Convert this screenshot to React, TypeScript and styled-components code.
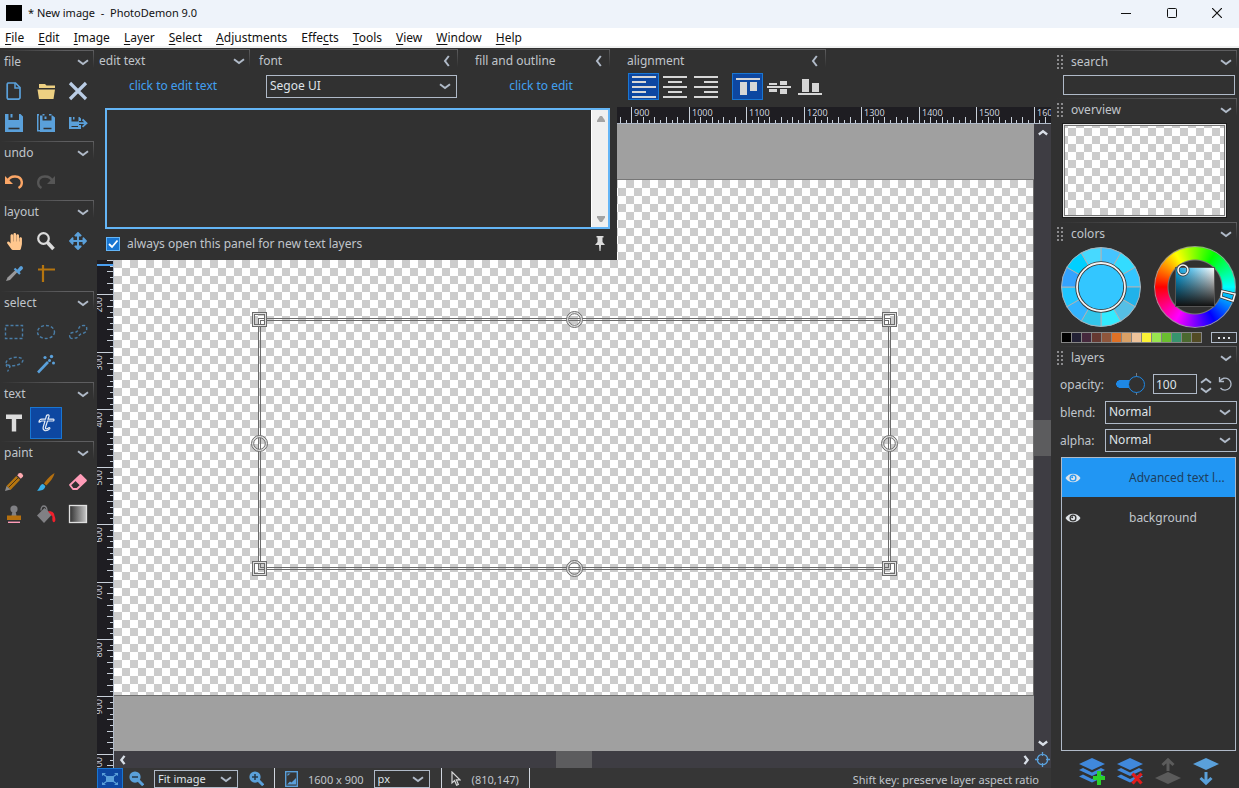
import React, { useId } from "react";
import styled, { createGlobalStyle, css } from "styled-components";
import { FaHandPaper, FaArrowsAlt } from "react-icons/fa";

const c = {
  bg: "#313131",
  line: "#5e5e60",
  text: "#c0c5cb",
  edge: "#b0bac8",
  blue: "#5aa0da",
  link: "#42a0f0",
  activeFill: "#0d47a1",
  activeEdge: "#1976d2",
  track: "#3e3d43",
  thumb: "#5c5c5e",
  ruler: "#1e1d22",
  canvas: "#a0a0a0",
};

const checker = css`
  background-color: #fff;
  background-image: conic-gradient(#fff 0 25%, #ccc 0 50%, #fff 0 75%, #ccc 0);
  background-size: 16px 16px;
`;

const GlobalStyle = createGlobalStyle`
  * { box-sizing: border-box; }
  body { margin: 0; background: ${c.bg}; }
  button, input, select, textarea { font: inherit; color: inherit; }
  button { padding: 0; border: 0; background: none; }
  svg { display: block; flex: none; }
`;

const Window = styled.div`
  display: flex;
  flex-direction: column;
  height: 100vh;
  min-height: 600px;
  overflow: hidden;
  background: ${c.bg};
  color: ${c.text};
  font: 12px/16px "Noto Sans", "Open Sans", sans-serif;
`;

/* title and menu */

const TitleBar = styled.header`
  display: flex;
  align-items: center;
  height: 28px;
  flex: none;
  padding-left: 6px;
  background: #eef3fa;
  color: #111;
`;
const AppIcon = styled.span`
  width: 16px;
  height: 16px;
  margin: 0 6px 2px 0;
  background: #000;
`;
const Title = styled.h1`
  flex: 1;
  margin: 0;
  padding-bottom: 2px;
  font-size: 11px;
  font-weight: 400;
  white-space: pre;
`;
const WindowButton = styled.button`
  display: grid;
  place-items: center;
  width: 46px;
  height: 24px;
  margin-bottom: 2px;
  &:last-child { width: 44px; }
`;
const MenuBar = styled.nav`
  display: flex;
  gap: 14px;
  height: 20px;
  flex: none;
  align-items: flex-end;
  padding-left: 5px;
  border-bottom: 2px solid #f0f1f1;
  background: #fff;
  color: #111;
`;
const MenuItem = styled.button`
  line-height: 16px;
  u { text-underline-offset: 2px; }
`;

const Body = styled.div`
  display: grid;
  grid-template-columns: 97px minmax(0, 1fr) 188px;
  grid-template-rows: minmax(0, 1fr);
  flex: 1;
  min-height: 0;
`;

/* panel headings */

const Heading = styled.button<{ $h: number }>`
  display: flex;
  align-items: center;
  width: 100%;
  height: ${(p) => p.$h}px;
  padding: 0 5px 0 4px;
  text-align: left;
  background:
    linear-gradient(to right, transparent, ${c.line} 70%) top / 100% 1px no-repeat,
    linear-gradient(${c.line}, transparent) right top / 1px 18px no-repeat;
  span { flex: 1; white-space: nowrap; }
`;

type Dir = "down" | "left" | "up" | "right";
const turn: Record<Dir, number> = { down: 0, left: 90, up: 180, right: 270 };

function Chevron({ dir = "down", size = 12, color = c.edge }: { dir?: Dir; size?: number; color?: string }) {
  return (
    <svg width={size} height={size} viewBox="0 0 12 12" aria-hidden="true">
      <path d="M1 4.2 6 8 11 4.2" fill="none" stroke={color} strokeWidth={size > 10 ? 2 : 2.8} transform={`rotate(${turn[dir]} 6 6)`} />
    </svg>
  );
}

/* tool box */

const ToolBox = styled.aside`
  padding: 2px 3px 0 0;
  overflow: hidden;
  ${Heading} { padding-bottom: 2px; }
`;
const ToolGroup = styled.section`
  margin-bottom: 2px;
`;
const ToolGrid = styled.div`
  display: grid;
  grid-template-columns: repeat(3, 32px);
  margin-left: -2px;
`;
const ToolButton = styled.button<{ $on?: boolean }>`
  display: grid;
  place-items: center;
  height: 32px;
  border: 1px solid ${(p) => (p.$on ? c.activeEdge : "transparent")};
  background: ${(p) => (p.$on ? c.activeFill : "transparent")};
`;

const Icon = ({ children, size = 20 }: { children: React.ReactNode; size?: number }) => (
  <svg width={size} height={size} viewBox="0 0 20 20" fill="none" aria-hidden="true">
    {children}
  </svg>
);

const dash = { stroke: "#4a7da6", strokeWidth: 1.4, strokeDasharray: "3 2" };

const toolGroups: { title: string; tools: { name: string; icon: React.ReactNode; on?: boolean }[] }[] = [
  {
    title: "file",
    tools: [
      { name: "New", icon: <Icon><path d="M4 2h7.500L16 6.500V17l-1.200 1.200H4L3.200 17V3z" stroke={c.blue} strokeWidth="1.700" /><path d="M11 2v5h5" stroke={c.blue} strokeWidth="1.500" /></Icon> },
      { name: "Open", icon: <Icon><path d="M3 3h6l1.500 1.500H19V7H3z" fill="#edd082" /><path d="M1.500 8.500h17.500L17.500 18H3z" fill="#edd082" /></Icon> },
      { name: "Close", icon: <Icon><path d="M2 2l16 16M18 2 2 18" stroke="#bacde6" strokeWidth="3.200" /></Icon> },
      { name: "Save", icon: <Icon><path d="M1 1h3.500v6h10.500V1h1.500L19 3.500V19H1z" fill={c.blue} /><path d="M6.500 1H8.500v3.500H6.500z" fill={c.blue} /><path d="M4.500 15.500h11" stroke="#313131" strokeWidth="1.600" /></Icon> },
      { name: "Save copy", icon: <Icon><path d="M1 1h2v1.500H2.500V17H4v1.500H1z" fill={c.blue} /><path d="M4 2.500h2.500v5h9v-5h1L19 4.500V19H4z" fill={c.blue} /><path d="M8.500 3.500h2V6h-2zM6.500 1h2v1.500h-2zM13 1h2.500v1.500H13z" fill={c.blue} /><path d="M7.500 15.500h8" stroke="#313131" strokeWidth="1.500" /></Icon> },
      { name: "Save as", icon: <Icon><path d="M1 4h2.500v4.500h7V4h1L13 5.500V8h-2v4h2v4H1z" fill={c.blue} /><path d="M5 4h1.500v2.500H5z" fill={c.blue} /><path d="M3.500 13.500H10" stroke="#313131" /><path d="M10.500 10.200H18M14.500 6.500l4 3.700-4 3.700" stroke={c.blue} strokeWidth="1.800" /></Icon> },
    ],
  },
  {
    title: "undo",
    tools: [
      { name: "Undo", icon: <Icon><path d="M3.500 9.500C6 2.500 17 3 17.800 10c.2 2.700-1 4.800-3.300 6" stroke="#fba666" strokeWidth="2.400" /><path d="M1 4v8h8z" fill="#fba666" /></Icon> },
      { name: "Redo", icon: <Icon><path d="M16.500 9.500C14 2.500 3 3 2.200 10c-.2 2.700 1 4.800 3.300 6" stroke="#565656" strokeWidth="2.400" /><path d="M19 4v8h-8z" fill="#565656" /></Icon> },
    ],
  },
  {
    title: "layout",
    tools: [
      { name: "Hand", icon: <FaHandPaper size={17} color="#ffc78e" /> },
      { name: "Zoom", icon: <Icon><circle cx="7.500" cy="7.500" r="5.300" stroke="#dcdcdc" strokeWidth="2.200" /><path d="M11.500 11.500l6 6.500" stroke="#dcdcdc" strokeWidth="3.600" /></Icon> },
      { name: "Move", icon: <FaArrowsAlt size={18} color={c.blue} /> },
      { name: "Color picker", icon: <Icon><path d="M2 18l1.500-3.500 8-7.500 2 2-7.500 8z" fill="#98989a" /><path d="M13 7l2.800-3.300a1.800 1.800 0 0 1 2.700 2.600L15 9.500" fill={c.blue} /><path d="M10.500 5.500l5.500 5.500" stroke={c.blue} strokeWidth="2.200" /></Icon> },
      { name: "Measure", icon: <Icon><path d="M7 2v17M2 6.500h17" stroke="#b5750f" strokeWidth="2.200" /></Icon> },
    ],
  },
  {
    title: "select",
    tools: [
      { name: "Rectangle", icon: <Icon><rect x="1.500" y="3.500" width="17" height="13" {...dash} /></Icon> },
      { name: "Ellipse", icon: <Icon><ellipse cx="10" cy="10" rx="8.500" ry="6.500" {...dash} /></Icon> },
      { name: "Polygon", icon: <Icon><path d="M2.500 16C.5 13.500 2 10.500 5 10.500S9.500 10 10.500 7 13 3.500 16 3.500s3 3 2.500 5-3.500 3-5.500 3.500-3 4-5 4-4 1-5.500 0z" {...dash} /></Icon> },
      { name: "Lasso", icon: <Icon><ellipse cx="10.500" cy="7.500" rx="8.500" ry="4" transform="rotate(-10 10.500 7.500)" {...dash} /><path d="M3 10c-2 2 1 4 2.500 2.500S5 15 3.500 17.500" {...dash} /></Icon> },
      { name: "Wand", icon: <Icon><path d="M2 18.500 12 8" stroke={c.blue} strokeWidth="2.600" /><g fill={c.blue}><circle cx="9" cy="3.500" r="1.600" /><circle cx="15.500" cy="2.500" r="1.700" /><circle cx="13.500" cy="6.500" r="1.500" /><circle cx="17.500" cy="9" r="1.500" /></g></Icon> },
    ],
  },
  {
    title: "text",
    tools: [
      { name: "Basic text", icon: <Icon><path d="M2 1.500h16v4.500h-5.800V18.500H7.800V6H2z" fill="#dcdcdc" /></Icon> },
      { name: "Advanced text", on: true, icon: <Icon><g stroke="#e6ecf5" strokeWidth="1.200"><path d="M10.500 2.500c1-1.200 3-.8 2.500.8L12 6.200h5.500c.8 0 .6 1.600-.4 1.800h-5.600l-2 6.500c-.3 1.600 1.200 1.900 3.300.2.800-.5 1.500.4.800 1.200-3 3-7.200 2.200-6.400-1.700L9 8H5.500c-.8.3-1.400 1.500-2.500 1 0-1.500 1-2.800 2.800-2.800h3.700z" /></g></Icon> },
    ],
  },
  {
    title: "paint",
    tools: [
      { name: "Pencil", icon: <Icon><path d="M2.500 14 12.200 4l4 3.800L6.500 18z" fill="#b5750f" /><path d="M4.500 15.500 14 6" stroke="#4a3414" strokeWidth="1" /><path d="M13.200 3.200l2-2a1.500 1.500 0 0 1 2 0l1.600 1.600a1.500 1.500 0 0 1 0 2l-2 2z" fill="#ffaab0" /><path d="M1 19l1.500-5L6.500 17.500z" fill="#8c8c8e" /></Icon> },
      { name: "Brush", icon: <Icon><path d="M18.500 1C15 3 10 8 8 11.500l2.300 2C13.500 10.500 18 5 18.500 1z" fill="#b5700f" /><path d="M7 12c-3.500.5-3 4.500-6 6.500 4 .8 8-.5 8.300-4.400z" fill="#38aee8" /></Icon> },
      { name: "Eraser", icon: <Icon><path d="M2 13 12.500 3 18 8.500 9 17H5z" stroke="#ff9cb8" strokeWidth="1.800" strokeLinejoin="round" /><path d="M7 8.500 12.500 3 18 8.500 12.500 14z" fill="#ff9cb8" /></Icon> },
      { name: "Clone stamp", icon: <Icon><circle cx="10" cy="5" r="3.600" fill="#808084" /><path d="M8.500 7h3l1 5h-5z" fill="#808084" /><path d="M3 11.500h14V16H3z" fill="#b5700f" /><path d="M4 18.300h12" stroke="#ff9cb8" strokeWidth="1.400" /></Icon> },
      { name: "Fill", icon: <Icon><path d="M1 11.500 8.500 4l7.500 6.500-8 8.500z" fill="#808084" /><path d="M5 6.500c0-6 5.500-6 6 0v2" stroke="#808084" strokeWidth="1.300" /><path d="M12 7.500c4-1 6.500 1.500 6.500 4.500 1.500 3 1 6-.5 6.200s-2-3-1.500-5.500z" fill="#f0202c" /></Icon> },
      { name: "Gradient", icon: <Icon><defs><linearGradient id="ramp"><stop stopColor="#303030" /><stop offset="1" stopColor="#c8c8c8" /></linearGradient></defs><rect x="1.500" y="1.500" width="17" height="17" fill="url(#ramp)" stroke="#e0e0e0" strokeWidth="1.300" /></Icon> },
    ],
  },
];

/* options bar */

const Center = styled.main`
  display: flex;
  flex-direction: column;
  min-width: 0;
`;
const OptionsBar = styled.div`
  display: flex;
  height: 59px;
  flex: none;
  padding-top: 1px;
`;
const Option = styled.section<{ $w: number; $gap?: number }>`
  width: ${(p) => p.$w}px;
  margin-left: ${(p) => p.$gap || 0}px;
  flex: none;
  ${Heading} { padding-left: 2px; }
`;
const OptionBody = styled.div<{ $center?: boolean }>`
  display: flex;
  align-items: center;
  justify-content: ${(p) => (p.$center ? "center" : "flex-end")};
  height: 26px;
  padding-right: 1px;
`;
const LinkText = styled.a`
  color: ${c.link};
  text-decoration: none;
`;
const AlignRow = styled.div`
  display: flex;
  gap: 11px;
  padding-left: 3px;
`;
const AlignSet = styled.div`
  display: flex;
`;
const AlignButton = styled.button<{ $on?: boolean }>`
  display: grid;
  place-items: center;
  width: 31px;
  height: 27px;
  border: 1px solid ${(p) => (p.$on ? c.activeEdge : "transparent")};
  background: ${(p) => (p.$on ? c.activeFill : "transparent")};
`;

const SelectBox = styled.span<{ $w?: number; $h?: number }>`
  position: relative;
  display: block;
  ${(p) => (p.$w ? `width: ${p.$w}px; flex: none;` : "flex: 1;")}
  height: ${(p) => p.$h || 23}px;
  select {
    appearance: none;
    width: 100%;
    height: 100%;
    padding: 0 20px 1px 3px;
    border: 1px solid ${c.edge};
    border-radius: 0;
    background: ${c.bg};
    color: #dfe3e8;
  }
  svg {
    position: absolute;
    right: 6px;
    top: calc(50% - 6px);
    pointer-events: none;
  }
`;

function Select({ label, value, w, h, id }: { label?: string; value: string; w?: number; h?: number; id?: string }) {
  return (
    <SelectBox $w={w} $h={h}>
      <select aria-label={label} id={id} defaultValue={value}>
        <option>{value}</option>
      </select>
      <Chevron />
    </SelectBox>
  );
}

const bar = (x: number, y: number, w: number) => <rect key={y} x={x} y={y} width={w} height="2" />;
const alignIcons = [0, 5, 10].map((shift) => (
  <svg key={shift} width="24" height="24" viewBox="0 0 24 24" fill="#d6d6d6" aria-hidden="true">
    {[1, 11, 21].map((y) => bar(0, y, 24))}
    {[6, 16].map((y) => bar(shift, y, 14))}
  </svg>
));
const valignIcons = [
  <svg key="t" width="24" height="24" viewBox="0 0 24 24" fill="#d6d6d6" aria-hidden="true"><path d="M0 3h24v2H0zM4 7h7v13H4zM14 7h7v9h-7z" /></svg>,
  <svg key="m" width="24" height="24" viewBox="0 0 24 24" fill="#d6d6d6" aria-hidden="true"><path d="M0 11h24v2H0zM2 8h8v2H2zM13 6h7v4h-7zM2 14h8v3H2zM13 14h7v5h-7z" /></svg>,
  <svg key="b" width="24" height="24" viewBox="0 0 24 24" fill="#d6d6d6" aria-hidden="true"><path d="M0 18h24v2H0zM4 4h7v13H4zM14 8h7v9h-7z" /></svg>,
];

/* work area */

const Work = styled.div`
  position: relative;
  display: grid;
  grid-template-columns: 17px minmax(0, 1fr) 17px;
  grid-template-rows: 17px minmax(0, 1fr) 17px;
  flex: 1;
  min-height: 0;
`;
const TopRuler = styled.div`
  grid-column: 1 / 4;
  overflow: hidden;
  border-bottom: 1px solid ${c.edge};
  background: ${c.ruler};
`;
const SideRuler = styled.div`
  grid-row: 2 / 4;
  overflow: hidden;
  border-right: 1px solid ${c.edge};
  background: ${c.ruler};
`;
const RulerSvg = styled.svg`
  width: 100%;
  height: 100%;
  fill: #c9d0da;
  font-size: 9px;
`;
const Viewport = styled.div`
  display: flex;
  padding: 56px 0 55px;
  background: ${c.canvas};
`;
const Picture = styled.div`
  position: relative;
  flex: 1;
  ${checker}
  box-shadow: 0 -1px 0 #777, inset -1px -1px 0 #6e6e6e;
`;
const Frame = styled.div`
  position: absolute;
  inset: 138px 143px 126px 144px;
  border: 3px double #6c6c6c;
`;
const spots = {
  nw: "left: -10px; top: -10px;",
  n: "left: calc(50% - 9px); top: -10px;",
  ne: "right: -10px; top: -10px;",
  w: "left: -10px; top: calc(50% - 9px);",
  e: "right: -10px; top: calc(50% - 9px);",
  sw: "left: -10px; bottom: -10px;",
  s: "left: calc(50% - 9px); bottom: -10px;",
  se: "right: -10px; bottom: -10px;",
};
const Handle = styled.svg<{ $at: keyof typeof spots }>`
  position: absolute;
  ${(p) => spots[p.$at]}
`;

const ScrollBar = styled.div<{ $vertical?: boolean }>`
  display: flex;
  flex-direction: ${(p) => (p.$vertical ? "column" : "row")};
  justify-content: space-between;
  background: ${c.track};
`;
const ScrollArrow = styled.button`
  display: grid;
  place-items: center;
  width: 17px;
  height: 17px;
`;
const ScrollThumb = styled.div<{ $vertical?: boolean }>`
  background: ${c.thumb};
  ${(p) => (p.$vertical ? "height: 36px;" : "width: 36px;")}
`;
const Corner = styled.button`
  display: grid;
  place-items: center;
  background: ${c.track};
`;

const unit = 919 / 1600;
const range = (end: number, step: number) => Array.from({ length: end / step + 1 }, (_, i) => i * step);
const tickLength = (v: number) => (v % 100 === 0 ? 16 : v % 20 === 0 ? 6 : 3);

/* text panel */

const TextPanel = styled.section`
  position: absolute;
  left: 0;
  top: 0;
  width: 520px;
  padding: 1px 7px 4px 8px;
  background: ${c.bg};
`;
const TextField = styled.div`
  display: flex;
  height: 121px;
  border: 2px solid #64b5f6;
  textarea {
    flex: 1;
    border: 0;
    padding: 2px;
    resize: none;
    outline: 0;
    overflow: hidden;
    background: ${c.bg};
  }
`;
const LightScroll = styled.div`
  display: flex;
  flex-direction: column;
  justify-content: space-between;
  width: 17px;
  border-left: 1px solid #fff;
  background: #f0f0f0;
`;
const PanelFoot = styled.div`
  display: flex;
  align-items: center;
  justify-content: space-between;
  height: 25px;
  margin-top: 2px;
  padding: 0 5px 0 1px;
`;
const CheckLabel = styled.label`
  display: grid;
  grid-template-columns: 14px auto;
  column-gap: 7px;
  align-items: center;
  input {
    appearance: none;
    grid-area: 1 / 1;
    width: 14px;
    height: 14px;
    margin: 0;
    border: 1px solid #64b5f6;
    background: #1976d2;
  }
  svg { grid-area: 1 / 1; pointer-events: none; z-index: 1; }
`;

/* status bar */

const StatusBar = styled.footer`
  display: flex;
  align-items: flex-start;
  height: 20px;
  flex: none;
  overflow: hidden;
  padding-right: 12px;
  background: #363636;
  font-size: 11px;
`;
const StatusButton = styled.button<{ $on?: boolean; $w: number }>`
  display: grid;
  place-items: center;
  width: ${(p) => p.$w}px;
  height: 21px;
  flex: none;
  border: 1px solid ${(p) => (p.$on ? c.activeEdge : "transparent")};
  background: ${(p) => (p.$on ? c.activeFill : "transparent")};
`;
const StatusSelect = styled.div<{ $l?: number; $r?: number }>`
  padding: 2px ${(p) => p.$r || 0}px 0 ${(p) => p.$l || 0}px;
`;
const Divider = styled.span`
  width: 1px;
  height: 20px;
  background: #d0d6de;
`;
const StatusText = styled.span`
  padding: 4px 10px 0 1px;
  white-space: nowrap;
`;
const Hint = styled.span`
  margin-left: auto;
  padding-top: 4px;
  white-space: nowrap;
`;

/* right side */

const Side = styled.aside`
  display: flex;
  flex-direction: column;
  padding: 2px 2px 0 6px;
  min-height: 0;
  ${Heading} { padding-left: 0; flex: none; }
`;
const Grip = () => (
  <svg width="14" height="16" viewBox="0 0 14 16" fill="#8b8b8d" aria-hidden="true">
    {[0, 4].map((x) => [1, 5, 9, 13].map((y) => <rect key={`${x}-${y}`} x={x} y={y} width="2" height="2" />))}
  </svg>
);
const SearchBox = styled.input`
  height: 20px;
  flex: none;
  margin: 1px 2px 3px 6px;
  border: 1px solid ${c.edge};
  background: ${c.bg};
`;
const Overview = styled.div`
  width: 165px;
  height: 95px;
  flex: none;
  margin: 1px 0 4px 5px;
  border: 1px solid #1c1c1c;
  padding: 1px;
  background: #e8e8e8;
  div {
    height: 100%;
    border: 1px solid #777;
    ${checker}
    background-position: 3px 2px;
  }
`;
const Wheels = styled.div`
  display: flex;
  justify-content: space-between;
  padding: 0 1px 0 4px;
`;
const SwatchRow = styled.div`
  display: flex;
  justify-content: space-between;
  margin: 4px 0 3px 4px;
`;
const Swatches = styled.div`
  display: flex;
  gap: 1px;
  padding: 1px;
  background: #858585;
`;
const Swatch = styled.button<{ $color: string }>`
  width: 9px;
  height: 9px;
  background: ${(p) => p.$color};
`;
const MoreButton = styled.button`
  display: grid;
  place-items: center;
  width: 26px;
  height: 11px;
  border: 1px solid ${c.edge};
`;
const Field = styled.div`
  display: flex;
  align-items: center;
  height: 28px;
  flex: none;
  padding-left: 3px;
  label { width: 45px; flex: none; padding-top: 1px; }
`;
const Opacity = styled.input`
  appearance: none;
  width: 29px;
  height: 22px;
  margin: 0 8px 0 11px;
  background:
    radial-gradient(circle closest-side, #1e88e5 90%, transparent) left center / 8px 8px no-repeat,
    linear-gradient(#1e88e5, #1e88e5) 4px center / 13px 8px no-repeat,
    linear-gradient(#77797c, #77797c) 20px center / 1px 22px no-repeat;
  &::-webkit-slider-thumb {
    appearance: none;
    width: 17px;
    height: 17px;
    border: 1px solid #1e88e5;
    border-radius: 50%;
    background: ${c.bg};
  }
`;
const OpacityValue = styled.input`
  width: 44px;
  height: 20px;
  padding: 0 2px;
  border: 1px solid ${c.edge};
  background: ${c.bg};
  color: #dfe3e8;
`;
const Spinner = styled.div`
  display: grid;
  width: 12px;
  margin: 0 6px 0 3px;
  button { height: 9px; display: grid; place-items: center; }
`;
const LayerList = styled.ul`
  flex: 1;
  min-height: 90px;
  margin: 3px 1px 0 4px;
  padding: 0;
  list-style: none;
  border: 1px solid ${c.edge};
`;
const LayerRow = styled.li<{ $on?: boolean }>`
  display: flex;
  align-items: center;
  height: 40px;
  padding-left: 3px;
  border-bottom: 1px solid ${c.bg};
  background: ${(p) => (p.$on ? "#2196f3" : c.bg)};
  color: ${(p) => (p.$on ? "#1d3f5e" : c.text)};
  button { width: 16px; height: 10px; color: ${(p) => (p.$on ? "#2196f3" : c.bg)}; }
  span { margin-left: 48px; white-space: nowrap; }
`;
const LayerActions = styled.div`
  display: flex;
  height: 37px;
  flex: none;
  align-items: center;
  padding: 4px 0 0 16px;
  button { width: 38px; height: 32px; display: grid; place-items: center; }
`;

const harmony = ["#45c4ff", "#33dcff", "#33c6ff", "#20b2ea", "#55bfe6", "#33ebff", "#33c6ea", "#33b4ff", "#1fc6ff", "#33a3ff", "#00d0ff", "#47d9ff"];
const swatches = ["#000000", "#222034", "#45283c", "#663931", "#8f563b", "#df7126", "#d9a066", "#eec39a", "#fbf236", "#99e550", "#6abe30", "#37946e", "#4b692f", "#524b24"];

function polar(r: number, deg: number) {
  const a = (deg * Math.PI) / 180;
  return `${(40 + r * Math.sin(a)).toFixed(2)} ${(40 - r * Math.cos(a)).toFixed(2)}`;
}

const HarmonyWheel = () => (
  <svg width="80" height="82" viewBox="0 -1 80 82" role="img" aria-label="Color harmony">
    {harmony.map((fill, i) => (
      <path key={fill + i} d={`M40 40L${polar(39.5, i * 30)}A39.5 39.5 0 0 1 ${polar(39.5, i * 30 + 30)}z`} fill={fill} stroke="#a9b4bc" strokeWidth="1" />
    ))}
    <circle cx="40" cy="40" r="24" fill="#33c6ff" stroke="#333" strokeWidth="3.500" />
    <circle cx="40" cy="40" r="24" fill="none" stroke="#f2f2f2" strokeWidth="1.800" />
  </svg>
);

const HueRing = styled.div`
  display: grid;
  place-items: center;
  width: 82px;
  height: 82px;
  border-radius: 50%;
  background:
    radial-gradient(circle, ${c.bg} 26px, #777 27px, transparent 28px),
    conic-gradient(from 270deg, red, yellow, lime, cyan, blue, magenta, red);
  box-shadow: inset 0 0 0 1px #999;
`;
const Shade = styled.div`
  grid-area: 1 / 1;
  width: 40px;
  height: 40px;
  border: 1px solid #555;
  background: linear-gradient(to top, #111, transparent), linear-gradient(to right, #00a4e8, #fff);
`;
const RingMarks = styled.svg`
  grid-area: 1 / 1;
  z-index: 1;
`;

const Eye = () => (
  <svg width="16" height="10" viewBox="0 0 16 10" fill="none" aria-hidden="true">
    <path d="M.5 5C4-.8 12-.8 15.500 5 12 10.800 4 10.800.5 5z" fill="#e0e4e8" />
    <circle cx="8" cy="5" r="2.900" stroke="currentColor" strokeWidth="1.300" />
    <circle cx="7.200" cy="4.200" r="1" fill="currentColor" />
  </svg>
);

function PanelHeading({ title, dir, h = 24, grip }: { title: string; dir?: Dir; h?: number; grip?: boolean }) {
  return (
    <Heading $h={h}>
      {grip && <Grip />}
      <span>{title}</span>
      <Chevron dir={dir} />
    </Heading>
  );
}

const menus = ["_File", "_Edit", "_Image", "_Layer", "_Select", "_Adjustments", "Effe_cts", "_Tools", "_View", "_Window", "_Help"];

const Stack = ({ color }: { color: string }) => (
  <>
    <path d="M14 0l13 6-13 6L1 6z" fill={color} />
    <path d="M1 12l4-2 9 4.500 9-4.500 4 2-13 6z" fill={color} />
    <path d="M1 18.500l4-2 9 4.500 9-4.500 4 2-13 6z" fill={color} />
  </>
);

export default function App() {
  const ids = useId();
  return (
    <Window>
      <GlobalStyle />
      <TitleBar>
        <AppIcon />
        <Title>{"* New image  -  PhotoDemon 9.0"}</Title>
        <WindowButton aria-label="Minimize"><svg width="10" height="10"><path d="M0 5.500h10" stroke="#111" /></svg></WindowButton>
        <WindowButton aria-label="Maximize"><svg width="10" height="10"><rect x=".5" y=".5" width="9" height="9" rx="1" fill="none" stroke="#111" /></svg></WindowButton>
        <WindowButton aria-label="Close"><svg width="10" height="10"><path d="M0 0l10 10M10 0 0 10" stroke="#111" strokeWidth="1.200" /></svg></WindowButton>
      </TitleBar>
      <MenuBar>
        {menus.map((m) => {
          const [before, rest] = m.split("_");
          return (
            <MenuItem key={m}>
              {before}<u>{rest[0]}</u>{rest.slice(1)}
            </MenuItem>
          );
        })}
      </MenuBar>

      <Body>
        <ToolBox>
          {toolGroups.map((g) => (
            <ToolGroup key={g.title}>
              <PanelHeading title={g.title} h={25} />
              <ToolGrid>
                {g.tools.map((t) => (
                  <ToolButton key={t.name} aria-label={t.name} $on={t.on}>{t.icon}</ToolButton>
                ))}
              </ToolGrid>
            </ToolGroup>
          ))}
        </ToolBox>

        <Center>
          <OptionsBar>
            <Option $w={153}>
              <PanelHeading title="edit text" />
              <OptionBody $center><LinkText href="#text">click to edit text</LinkText></OptionBody>
            </Option>
            <Option $w={201} $gap={7}>
              <PanelHeading title="font" dir="left" />
              <OptionBody><Select label="Font" value="Segoe UI" w={191} /></OptionBody>
            </Option>
            <Option $w={137} $gap={15}>
              <PanelHeading title="fill and outline" dir="left" />
              <OptionBody $center><LinkText href="#fill">click to edit</LinkText></OptionBody>
            </Option>
            <Option $w={201} $gap={15}>
              <PanelHeading title="alignment" dir="left" />
              <AlignRow>
                <AlignSet>
                  {["Left", "Center", "Right"].map((n, i) => <AlignButton key={n} aria-label={n} $on={i === 0}>{alignIcons[i]}</AlignButton>)}
                </AlignSet>
                <AlignSet>
                  {["Top", "Middle", "Bottom"].map((n, i) => <AlignButton key={n} aria-label={n} $on={i === 0}>{valignIcons[i]}</AlignButton>)}
                </AlignSet>
              </AlignRow>
            </Option>
          </OptionsBar>

          <Work>
            <TopRuler>
              <RulerSvg>
                {range(1640, 10).map((v) => {
                  const x = Math.floor(18 + v * unit);
                  return <rect key={v} x={x} y={16 - tickLength(v)} width="1" height={tickLength(v)} />;
                })}
                {range(1600, 100).map((v) => (
                  <text key={v} x={Math.floor(18 + v * unit) + 3} y="9">{v}</text>
                ))}
              </RulerSvg>
            </TopRuler>
            <SideRuler>
              <RulerSvg>
                {range(1030, 10).map((v) => {
                  const y = Math.floor(56 + v * unit);
                  return <rect key={v} x={16 - tickLength(v)} y={y} width={tickLength(v)} height="1" />;
                })}
                {range(1000, 100).map((v) => {
                  const y = Math.floor(56 + v * unit) + 3;
                  return <text key={v} transform={`translate(5 ${y}) rotate(-90)`} textAnchor="end">{v}</text>;
                })}
                <rect x="0" y="140" width="17" height="2" fill="#4a9ff0" />
              </RulerSvg>
            </SideRuler>
            <Viewport>
              <Picture>
                <Frame>
                  {(["nw", "ne", "sw", "se"] as const).map((at) => (
                    <Handle key={at} $at={at} width="17" height="17" viewBox="0 0 17 17" fill="none">
                      <rect x="2.500" y="2.500" width="12" height="12" stroke="#e0e0e0" strokeWidth="2" />
                      <rect x="1.500" y="1.500" width="14" height="14" stroke="#6c6c6c" />
                      <rect x="3.500" y="3.500" width="10" height="10" stroke="#6c6c6c" />
                    </Handle>
                  ))}
                  {(["n", "w", "e", "s"] as const).map((at) => (
                    <Handle key={at} $at={at} width="17" height="17" viewBox="0 0 17 17" fill="none">
                      <circle cx="8.500" cy="8.500" r="7" stroke="#e0e0e0" strokeWidth="2" />
                      <circle cx="8.500" cy="8.500" r="8" stroke="#6c6c6c" />
                      <circle cx="8.500" cy="8.500" r="5.800" stroke="#6c6c6c" />
                    </Handle>
                  ))}
                </Frame>
              </Picture>
            </Viewport>
            <ScrollBar $vertical>
              <ScrollArrow aria-label="Scroll up"><Chevron dir="up" size={10} color="#d8dee6" /></ScrollArrow>
              <ScrollThumb $vertical />
              <ScrollArrow aria-label="Scroll down"><Chevron size={10} color="#d8dee6" /></ScrollArrow>
            </ScrollBar>
            <ScrollBar>
              <ScrollArrow aria-label="Scroll left"><Chevron dir="left" size={10} color="#d8dee6" /></ScrollArrow>
              <ScrollThumb />
              <ScrollArrow aria-label="Scroll right"><Chevron dir="right" size={10} color="#d8dee6" /></ScrollArrow>
            </ScrollBar>
            <Corner aria-label="Center image">
              <svg width="15" height="15" viewBox="0 0 15 15" fill="none" stroke={c.blue} strokeWidth="1.300">
                <circle cx="7.500" cy="7.500" r="5.200" />
                <path d="M7.500 0v4M7.500 11v4M0 7.500h4M11 7.500h4" />
              </svg>
            </Corner>

            <TextPanel>
              <TextField>
                <textarea aria-label="Layer text" />
                <LightScroll>
                  <ScrollArrow aria-label="Line up"><svg width="8" height="6"><path d="M0 6V4.500L3 0h2l3 4.500V6z" fill="#a3a3a3" /></svg></ScrollArrow>
                  <ScrollArrow aria-label="Line down"><svg width="8" height="6"><path d="M0 0v1.500L3 6h2l3-4.500V0z" fill="#a3a3a3" /></svg></ScrollArrow>
                </LightScroll>
              </TextField>
              <PanelFoot>
                <CheckLabel>
                  <input type="checkbox" defaultChecked />
                  <svg width="14" height="14" viewBox="0 0 14 14" aria-hidden="true"><path d="M3 7l3 3 5.500-6.500" fill="none" stroke="#fff" strokeWidth="1.800" /></svg>
                  always open this panel for new text layers
                </CheckLabel>
                <button aria-label="Pin panel">
                  <svg width="10" height="16" viewBox="0 0 10 16" fill="#dcdcdc"><path d="M1.500 0h7v1.500H7.500V6L10 9H6l-.5 6h-1L4 9H0l2.500-3V1.500h-1z" /></svg>
                </button>
              </PanelFoot>
            </TextPanel>
          </Work>

          <StatusBar>
            <StatusButton $on $w={26} aria-label="Fit on screen">
              <svg width="16" height="12" viewBox="0 0 16 12" aria-hidden="true"><path d="M4 3h8v6H4z" fill={c.blue} /><path d="M1 1l14 10M15 1 1 11" stroke={c.blue} strokeWidth="1.200" /><path d="M0 0h4L0 3zM16 0v3l-4-3zM0 12V9l4 3zM16 12h-4l4-3z" fill={c.blue} /></svg>
            </StatusButton>
            <StatusButton $w={26} aria-label="Zoom out">
              <Icon size={15}><circle cx="8" cy="8" r="7.500" fill={c.blue} /><path d="M12 12l7 7" stroke={c.blue} strokeWidth="4" /><path d="M4 8h8" stroke="#26384a" strokeWidth="2" /></Icon>
            </StatusButton>
            <StatusSelect $l={5}><Select label="Zoom" value="Fit image" w={84} h={18} /></StatusSelect>
            <StatusButton $w={36} aria-label="Zoom in">
              <Icon size={15}><circle cx="8" cy="8" r="7.500" fill={c.blue} /><path d="M12 12l7 7" stroke={c.blue} strokeWidth="4" /><path d="M4 8h8M8 4v8" stroke="#26384a" strokeWidth="2" /></Icon>
            </StatusButton>
            <Divider />
            <StatusButton $w={32} aria-label="Image size">
              <svg width="13" height="16" viewBox="0 0 13 16"><rect x=".7" y=".7" width="11.600" height="14.600" fill="none" stroke={c.blue} strokeWidth="1.400" /><path d="M2 13.500l3-3 1.500 1L11 7v6.500z" fill={c.blue} /><path d="M2.500 2.500h3L2.500 5z" fill={c.blue} /></svg>
            </StatusButton>
            <StatusText>1600 x 900</StatusText>
            <StatusSelect $r={11}><Select label="Unit" value="px" w={56} h={18} /></StatusSelect>
            <Divider />
            <StatusButton $w={29} aria-label="Cursor position">
              <svg width="10" height="15" viewBox="0 0 10 15" fill="none" stroke="#d6d6d6" strokeWidth="1.200"><path d="M1 1v11l2.600-2.400 2 4.600 1.800-.8-2-4.500H9z" /></svg>
            </StatusButton>
            <StatusText>(810,147)</StatusText>
            <Divider />
            <Hint>Shift key: preserve layer aspect ratio</Hint>
          </StatusBar>
        </Center>

        <Side>
          <PanelHeading title="search" grip />
          <SearchBox type="search" aria-label="Search" />
          <PanelHeading title="overview" grip />
          <Overview><div /></Overview>
          <PanelHeading title="colors" grip />
          <Wheels>
            <HarmonyWheel />
            <HueRing>
              <Shade />
              <RingMarks width="82" height="82" viewBox="0 0 82 82" fill="none" overflow="visible">
                <circle cx="29" cy="24" r="5" stroke="#333" strokeWidth="3" />
                <circle cx="29" cy="24" r="5" stroke="#f4f4f4" strokeWidth="1.600" />
                <path d="M68 45l13 3-2 7-12-4z" stroke="#333" strokeWidth="3" />
                <path d="M68 45l13 3-2 7-12-4z" stroke="#f4f4f4" strokeWidth="1.600" />
              </RingMarks>
            </HueRing>
          </Wheels>
          <SwatchRow>
            <Swatches>{swatches.map((s) => <Swatch key={s} $color={s} aria-label={s} />)}</Swatches>
            <MoreButton aria-label="More colors"><svg width="12" height="2" fill="#dfe3e8"><path d="M0 0h2v2H0zM5 0h2v2H5zM10 0h2v2h-2z" /></svg></MoreButton>
          </SwatchRow>
          <PanelHeading title="layers" grip />
          <Field>
            <label htmlFor={`${ids}o`}>opacity:</label>
            <Opacity type="range" min={0} max={100} defaultValue={100} aria-label="Opacity slider" />
            <OpacityValue id={`${ids}o`} defaultValue="100" />
            <Spinner>
              <button aria-label="Increase"><Chevron dir="up" /></button>
              <button aria-label="Decrease"><Chevron /></button>
            </Spinner>
            <button aria-label="Reset opacity">
              <svg width="14" height="16" viewBox="0 0 14 16" fill="none" stroke={c.edge} strokeWidth="1.300"><path d="M1.500 1v4.500H6M1.800 5.200A6 6 0 1 1 2.500 12" /></svg>
            </button>
          </Field>
          <Field>
            <label htmlFor={`${ids}b`}>blend:</label>
            <Select id={`${ids}b`} value="Normal" />
          </Field>
          <Field>
            <label htmlFor={`${ids}a`}>alpha:</label>
            <Select id={`${ids}a`} value="Normal" />
          </Field>
          <LayerList>
            <LayerRow $on><button aria-label="Toggle visibility"><Eye /></button><span>Advanced text l...</span></LayerRow>
            <LayerRow><button aria-label="Toggle visibility"><Eye /></button><span>background</span></LayerRow>
          </LayerList>
          <LayerActions>
            <button aria-label="Add layer"><svg width="28" height="28" viewBox="0 0 28 28"><Stack color="#4088dc" /><path d="M15 18h4v-5h4v5h4v4h-4v5h-4v-5h-4z" fill="#2bd02b" /></svg></button>
            <button aria-label="Delete layer"><svg width="28" height="28" viewBox="0 0 28 28"><Stack color="#4088dc" /><path d="M16.500 15.500l9 10M25.500 15.500l-9 10" stroke="#e01c1c" strokeWidth="3.200" /></svg></button>
            <button aria-label="Move layer up"><svg width="26" height="28" viewBox="0 0 26 28" fill="#5b5b5b"><path d="M13 14l13 6-13 6-13-6z" /><path d="M13 1v12M7.500 7 13 1.800 18.500 7" fill="none" stroke="#5b5b5b" strokeWidth="3" /></svg></button>
            <button aria-label="Move layer down"><svg width="26" height="28" viewBox="0 0 26 28" fill={c.blue}><path d="M13 0l13 6-13 6L0 6z" /><path d="M13 14v11M7.500 20l5.500 5.200 5.500-5.200" fill="none" stroke={c.blue} strokeWidth="3" /></svg></button>
          </LayerActions>
        </Side>
      </Body>
    </Window>
  );
}
